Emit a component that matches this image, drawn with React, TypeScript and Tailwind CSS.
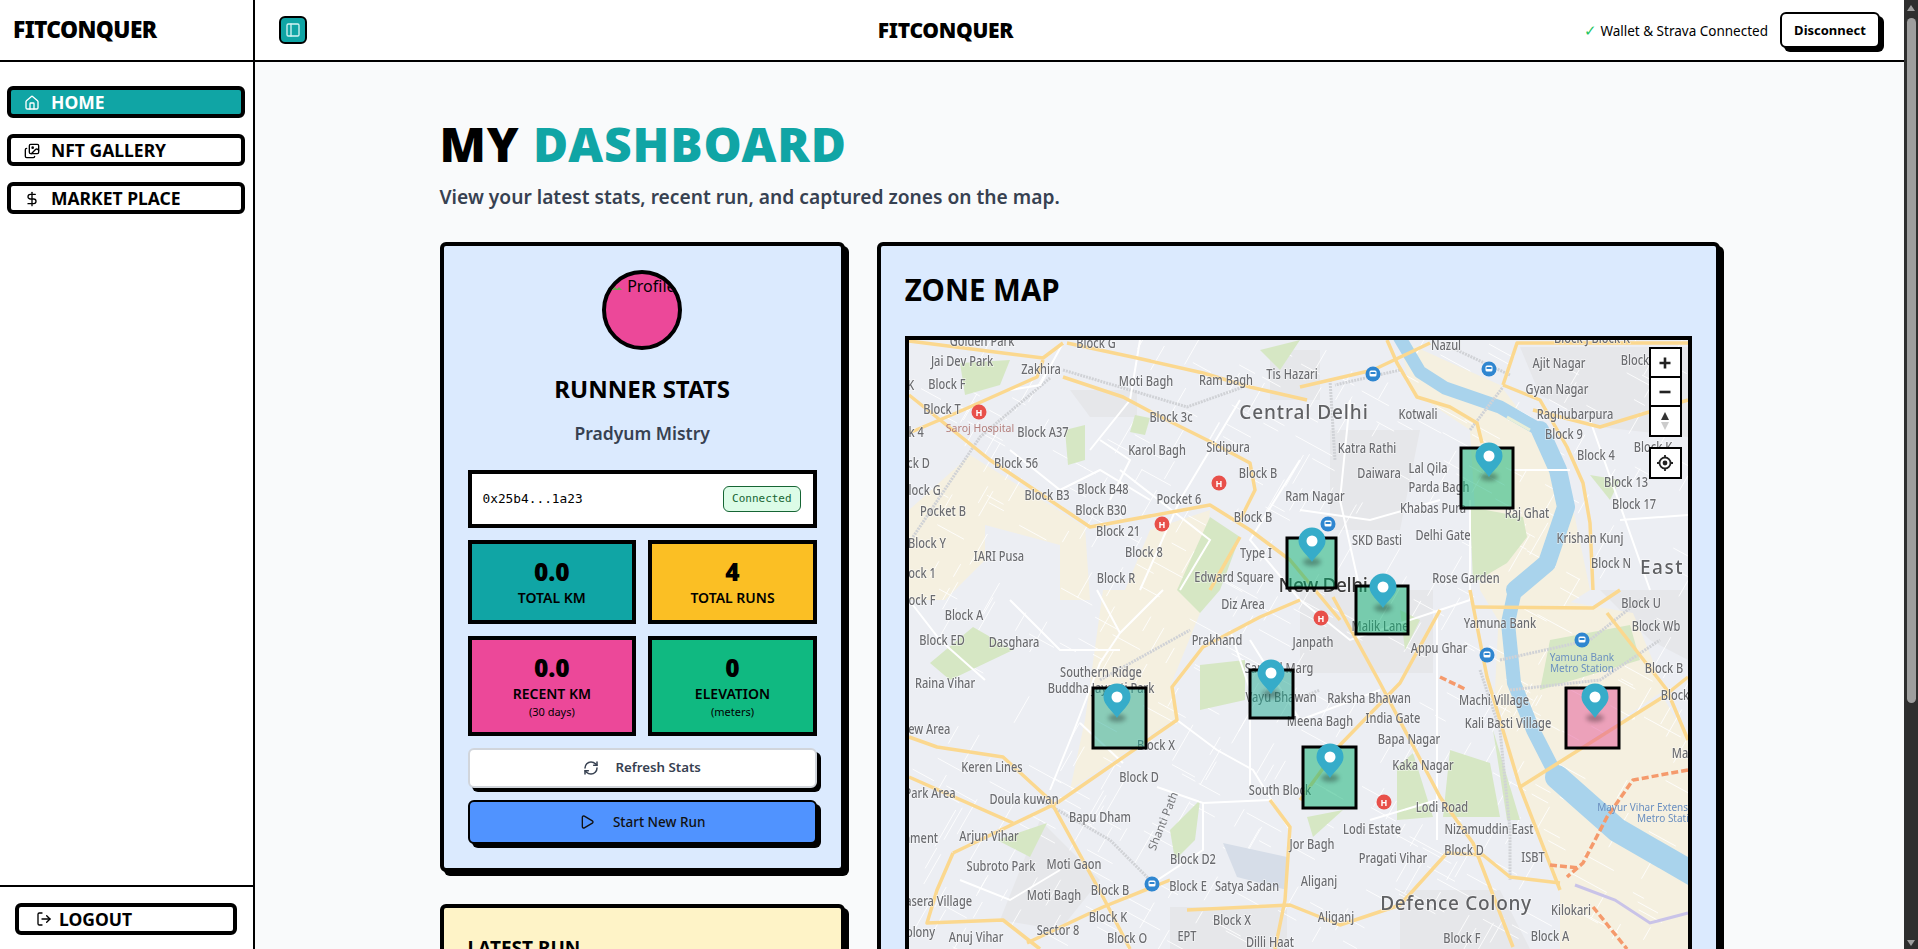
import { DollarSign, House, Images, LogOut, PanelLeft, Play, RefreshCw } from "lucide-react";

const labels: [string, number, number][] = [
  ["Golden Park", 982, 346], ["Block G", 1096, 348], ["Jai Dev Park", 962, 366], ["Zakhira", 1041, 374],
  ["Moti Bagh", 1146, 386], ["Ram Bagh", 1226, 385], ["Tis Hazari", 1292, 379], ["Block K", 895, 390],
  ["Block F", 947, 389], ["Block T", 942, 414], ["Block 4", 905, 437], ["Block A37", 1043, 437],
  ["Block 3c", 1171, 422], ["Karol Bagh", 1157, 455], ["Sidipura", 1228, 452], ["Block D", 910, 468],
  ["Block 56", 1016, 468], ["Block B", 1258, 478], ["Block G", 921, 495], ["Block B3", 1047, 500],
  ["Block B48", 1103, 494], ["Pocket 6", 1179, 504], ["Ram Nagar", 1315, 501], ["Pocket B", 943, 516],
  ["Block B30", 1101, 515], ["Block B", 1253, 522], ["Block 21", 1118, 536], ["Block Y", 927, 548],
  ["Block 8", 1144, 557], ["Type I", 1256, 558], ["IARI Pusa", 999, 561], ["Block 1", 917, 578],
  ["Block R", 1116, 583], ["Edward Square", 1234, 582], ["Nazul", 1446, 350], ["Block J Block K", 1592, 343],
  ["Ajit Nagar", 1559, 368], ["Block", 1635, 365], ["Gyan Nagar", 1557, 394], ["Kotwali", 1418, 419],
  ["Raghubarpura", 1575, 419], ["Block 9", 1564, 439], ["Katra Rathi", 1367, 453], ["Block 4", 1596, 460],
  ["Block K", 1653, 452], ["Lal Qila", 1428, 473], ["Daiwara", 1379, 478], ["Parda Bagh", 1439, 492],
  ["Block 13", 1626, 487], ["Block 17", 1634, 509], ["Khabas Pura", 1433, 513], ["Raj Ghat", 1527, 518],
  ["SKD Basti", 1377, 545], ["Delhi Gate", 1443, 540], ["Krishan Kunj", 1590, 543], ["Block N", 1611, 568],
  ["Rose Garden", 1466, 583], ["Block F", 917, 605], ["Block A", 964, 620], ["Block ED", 942, 645],
  ["Dasghara", 1014, 647], ["Diz Area", 1243, 609], ["Prakhand", 1217, 645], ["Janpath", 1313, 647],
  ["Sansad Marg", 1279, 673], ["Southern Ridge", 1101, 677], ["Buddha Jayanti Park", 1101, 693], ["Raina Vihar", 945, 688],
  ["Vayu Bhawan", 1281, 702], ["New Area", 925, 734], ["Block X", 1156, 750], ["Meena Bagh", 1320, 726],
  ["Keren Lines", 992, 772], ["Block D", 1139, 782], ["Park Area", 930, 798], ["Doula kuwan", 1024, 804],
  ["South Block", 1280, 795], ["Bapu Dham", 1100, 822], ["Arjun Vihar", 989, 841], ["Cantonment", 905, 843],
  ["Subroto Park", 1001, 871], ["Moti Gaon", 1074, 869], ["Block D2", 1193, 864], ["Jor Bagh", 1312, 849],
  ["Block E", 1188, 891], ["Satya Sadan", 1247, 891], ["Block B", 1110, 895], ["Moti Bagh", 1054, 900],
  ["Aliganj", 1319, 886], ["Basera Village", 935, 906], ["Block K", 1108, 922], ["Block X", 1232, 925],
  ["Colony", 917, 937], ["Anuj Vihar", 976, 942], ["Sector 8", 1058, 935], ["Block O", 1127, 943],
  ["EPT", 1187, 941], ["Dilli Haat", 1270, 947], ["Malik Lane", 1380, 631], ["Block U", 1641, 608],
  ["Block Wb", 1656, 631], ["Yamuna Bank", 1500, 628], ["Appu Ghar", 1439, 653], ["Block B", 1664, 673],
  ["Block", 1675, 700], ["Raksha Bhawan", 1369, 703], ["Machi Village", 1494, 705], ["India Gate", 1393, 723],
  ["Kali Basti Village", 1508, 728], ["Bapa Nagar", 1409, 744], ["Kaka Nagar", 1423, 770], ["Ma", 1680, 758],
  ["Lodi Road", 1442, 812], ["Lodi Estate", 1372, 834], ["Nizamuddin East", 1489, 834], ["Block D", 1464, 855],
  ["ISBT", 1533, 862], ["Pragati Vihar", 1393, 863], ["Aliganj", 1336, 922], ["Kilokari", 1571, 915],
  ["Block F", 1462, 943], ["Block A", 1550, 941],
];

const bigLabels: [string, number, number, number, string][] = [
  ["Central Delhi", 1304, 419, 0.9, "#606164"],
  ["East", 1662, 574, 1.5, "#606164"],
  ["New Delhi", 1323, 592, -0.4, "#3a3a3a"],
  ["Defence Colony", 1456, 910, 0.7, "#606164"],
];

const blueLabels: [string, number, number][] = [
  ["Yamuna Bank", 1582, 661], ["Metro Station", 1582, 672], ["Mayur Vihar Extension", 1650, 811], ["Metro Station", 1669, 822],
];

const urban = [
  "1520,347 1688,347 1688,437 1600,427 1540,395",
  "1070,390 1137,390 1137,417 1090,417",
  "1300,590 1433,590 1433,673 1300,673",
  "1170,907 1287,907 1287,949 1170,949",
  "1270,350 1320,350 1320,400 1270,400",
  "1600,590 1688,590 1688,660 1650,640",
  "1400,890 1500,890 1530,949 1400,949",
  "1040,820 1100,880 1060,930 1000,920",
  "1330,430 1420,430 1400,530 1330,530",
];

const beige = [
  "909,510 970,455 1085,527 1090,600 1060,600 1060,545 985,525 985,560 945,600 909,600",
  "1103,590 1125,590 1150,530 1210,510 1200,613 1170,687 1177,717 1070,790 1085,720",
  "1400,340 1500,385 1565,470 1590,590 1510,640 1480,590 1470,430 1410,390",
  "1500,590 1633,613 1665,690 1520,787 1495,690",
  "1520,787 1663,697 1688,740 1688,949 1560,949 1560,890",
];

const greens = [
  "1177,590 1210,517 1240,537 1220,590 1200,613",
  "1470,507 1523,517 1527,537 1507,563 1473,583",
  "1397,767 1413,753 1433,817 1397,820",
  "1450,750 1490,763 1500,817 1443,817",
  "1493,730 1520,820 1507,820",
  "1307,817 1343,810 1313,837",
  "930,663 973,627 1013,650 950,680",
  "997,840 1047,823 1030,857",
  "960,363 1010,360 1000,385 965,395",
  "1065,430 1085,425 1085,460 1068,465",
  "1135,415 1150,418 1145,435 1130,432",
  "1260,350 1300,340 1280,370",
  "1200,665 1245,660 1245,700 1200,710",
  "1400,610 1420,620 1405,650",
  "1590,475 1620,480 1610,500",
  "1550,640 1630,625 1640,660 1540,690",
  "1170,830 1200,800 1195,840 1175,860",
];

const majorRoads = [
  "M909,395 L990,460 L1090,527 L1210,505 L1250,530 L1290,560 L1340,620",
  "M909,341 L1003,353 L1043,358 L1063,343",
  "M1067,343 L1137,358 L1203,373 L1250,387 L1307,400",
  "M909,433 L963,410 L1037,377 L1043,360",
  "M1063,377 L1123,397 L1153,413 L1207,440 L1250,463 L1255,490 L1240,520",
  "M909,777 L1013,823",
  "M909,737 L937,747 L1003,757 L1050,800 L1103,897 L1130,949",
  "M953,853 L1057,803 L1177,720 L1172,687 L1203,647 L1260,617 L1300,600",
  "M953,853 L937,890 L927,923 L1003,920 L1040,949",
  "M1027,943 L1103,907 L1170,880",
  "M1300,387 L1373,370 L1430,343",
  "M1387,340 L1397,363 L1417,397 L1450,407 L1477,423 L1482,443",
  "M1503,385 L1540,400 L1567,447 L1583,483 L1590,523 L1593,590",
  "M1503,385 L1517,343 L1690,343",
  "M1533,410 L1600,427 L1688,400",
  "M1470,590 L1487,677 L1520,787 L1560,890",
  "M1520,787 L1663,697 L1688,677",
  "M1472,607 L1593,608 L1620,590",
  "M1607,613 L1667,690 L1688,740",
  "M1440,610 L1400,683 L1340,745 L1300,800",
  "M1333,597 L1380,683 L1440,797 L1473,843 L1513,947",
  "M1447,853 L1483,855 L1510,877 L1560,883",
  "M1270,800 L1290,827 L1285,900 L1275,949",
  "M1240,537 L1210,590",
  "M1187,910 L1290,905 L1340,925 L1400,905 L1447,853",
];

const minorRoads = [
  "M1097,590 L1120,633 L1100,663 L1073,733 L1050,790",
  "M1163,590 L1120,633",
  "M1177,720 L1217,750 L1253,770 L1290,830",
  "M1080,723 L1123,763",
  "M1157,787 L1203,803 L1270,800",
  "M1203,803 L1203,850 L1150,885",
  "M1063,343 L1040,385 L1010,390",
  "M1140,340 L1130,400 L1090,450",
  "M1240,400 L1180,500 L1140,590",
  "M1010,450 L1060,490 L1100,470 L1150,500",
  "M1120,470 L1210,540 L1180,590",
  "M1300,460 L1250,540 L1300,600",
  "M1300,510 L1370,520 L1440,500",
  "M1350,400 L1340,500 L1360,590",
  "M1470,500 L1470,600 L1440,610",
  "M1510,470 L1570,470",
  "M1590,420 L1650,590",
  "M1620,520 L1688,515",
  "M1300,600 L1350,640 L1440,610",
  "M1250,640 L1300,720 L1380,690",
  "M1230,630 L1250,690 L1250,790",
  "M909,600 L940,640 L985,680",
  "M1370,820 L1437,800",
  "M1437,610 L1437,840",
  "M1100,440 L1130,460 L1110,500",
  "M1010,600 L1060,650 L1120,650",
  "M960,880 L1010,900 L1060,870",
];

const rails = [
  "M913,537 L980,437 L1050,378",
  "M1063,370 L1187,407 L1243,387",
  "M1100,680 L1190,630",
  "M1400,370 L1335,385",
  "M1446,345 L1510,375",
  "M1470,430 L1503,387",
  "M1040,800 L1110,840 L1150,880",
  "M1480,670 L1500,730 L1510,830 L1510,880",
  "M1500,660 L1590,640 L1640,600",
  "M1510,690 L1600,680 L1660,640",
  "M1330,380 L1335,460",
  "M1295,700 L1320,690",
];

// fine street texture, fixed seed so the picture never changes
let seed = 4711;
const rnd = () => {
  seed = (seed * 16807) % 2147483647;
  return seed / 2147483647;
};
const streets: string[] = [];
for (let i = 0; i < 480; i++) {
  const x = 909 + rnd() * 779;
  const y = 340 + rnd() * 620;
  const len = 12 + rnd() * 30;
  const a = i % 2 === 0 ? 0.5 : -1.05;
  streets.push(`M${x.toFixed(1)},${y.toFixed(1)} l${(Math.cos(a) * len).toFixed(1)},${(Math.sin(a) * len).toFixed(1)}`);
}

const buses: [number, number][] = [[1373, 374], [1489, 369], [1328, 524], [1152, 884], [1487, 655], [1582, 640]];
const hospitals: [number, number][] = [[979, 412], [1219, 483], [1162, 524], [1321, 618], [1384, 802]];

const zones = [
  { x: 1461, y: 448, w: 52, h: 60, fill: "#08b070" },
  { x: 1287, y: 538, w: 49, h: 50, fill: "#08b070" },
  { x: 1356, y: 586, w: 52, h: 48, fill: "#08b070" },
  { x: 1093, y: 688, w: 53, h: 60, fill: "#20a890" },
  { x: 1250, y: 670, w: 43, h: 48, fill: "#20a890" },
  { x: 1303, y: 747, w: 53, h: 61, fill: "#08b070" },
  { x: 1566, y: 688, w: 53, h: 60, fill: "#e45293" },
];

const pins: [number, number][] = [[1489, 456], [1312, 541], [1383, 587], [1117, 697], [1271, 673], [1330, 757], [1595, 697]];

const navItems = [
  { label: "HOME", icon: House, active: true },
  { label: "NFT GALLERY", icon: Images, active: false },
  { label: "MARKET PLACE", icon: DollarSign, active: false },
];

const stats = [
  { value: "0.0", label: "TOTAL KM", bg: "bg-[#10a5a5]" },
  { value: "4", label: "TOTAL RUNS", bg: "bg-[#fbbf24]" },
  { value: "0.0", label: "RECENT KM", sub: "(30 days)", bg: "bg-[#ec4899]" },
  { value: "0", label: "ELEVATION", sub: "(meters)", bg: "bg-[#10b981]" },
];

const ZoneMap = () => (
  <svg viewBox="909 340 779 640" className="block w-[779px] h-[640px]">
    <rect x="909" y="340" width="779" height="640" fill="#eceef3" />
    <g className="blur-[0.5px]">
      {urban.map((points) => (
        <polygon key={points} points={points} fill="#e6e7ea" />
      ))}
      {beige.map((points) => (
        <polygon key={points} points={points} fill="#f5f0e0" />
      ))}
      {streets.map((d) => (
        <path key={d} d={d} fill="none" stroke="#ffffff" strokeWidth="1" strokeOpacity="0.85" />
      ))}
      {greens.map((points) => (
        <polygon key={points} points={points} fill="#d6e7c4" />
      ))}
      <polygon points="1223,843 1287,857 1287,890 1237,877" fill="#d6dde8" />
      <path d="M1398,335 L1420,372 L1445,388 L1500,407 L1540,430" fill="none" stroke="#a9d3ec" strokeWidth="13" strokeLinejoin="round" />
      <path d="M1540,430 L1558,470 L1566,507 L1547,563 L1515,590" fill="none" stroke="#a9d3ec" strokeWidth="18" strokeLinejoin="round" strokeLinecap="round" />
      <path d="M1515,590 L1508,623 L1514,683 L1533,730 L1557,777" fill="none" stroke="#a9d3ec" strokeWidth="14" strokeLinejoin="round" strokeLinecap="round" />
      <path d="M1557,777 L1617,830 L1695,875" fill="none" stroke="#a9d3ec" strokeWidth="24" strokeLinejoin="round" strokeLinecap="round" />
      <path d="M1507,417 L1530,430" fill="none" stroke="#e9efd8" strokeWidth="3" />
      {rails.map((d) => (
        <path key={d} d={d} fill="none" stroke="#d0d2d6" strokeWidth="3" strokeDasharray="2 1" />
      ))}
      {minorRoads.map((d) => (
        <path key={d} d={d} fill="none" stroke="#ffffff" strokeWidth="2" />
      ))}
      {majorRoads.map((d) => (
        <path key={d} d={d} fill="none" stroke="#fbd88f" strokeWidth="3.5" strokeLinejoin="round" />
      ))}
      <path d="M1575,885 L1615,900 L1650,923 L1688,913" fill="none" stroke="#c9c3e8" strokeWidth="3" />
      <path d="M1688,770 L1633,780 L1607,817 L1583,863 L1567,877 M1593,907 L1627,949 M1440,677 L1467,690 M1550,865 L1580,868" fill="none" stroke="#f59a6c" strokeWidth="3.5" strokeDasharray="7 3" />
      {buses.map(([x, y]) => (
        <g key={`${x}-${y}`}>
          <circle cx={x} cy={y} r="7.5" fill="#2f86d0" />
          <rect x={x - 3.5} y={y - 3.5} width="7" height="6" rx="1.5" fill="#fff" />
          <rect x={x - 2.5} y={y - 2} width="5" height="2" fill="#2f86d0" />
        </g>
      ))}
      {hospitals.map(([x, y]) => (
        <g key={`${x}-${y}`}>
          <circle cx={x} cy={y} r="7.5" fill="#e8504a" />
          <text x={x} y={y + 3.5} textAnchor="middle" fontSize="9" fontWeight="700" fill="#fff">H</text>
        </g>
      ))}
      {labels.map(([text, x, y]) => (
        <text
          key={`${text}-${x}`}
          transform={`translate(${x} ${y}) scale(0.82 1)`}
          textAnchor="middle"
          fontSize="13.5"
          fontWeight="500"
          fill="#6b6c70"
          stroke="#fff"
          strokeOpacity="0.55"
          strokeWidth="1.5"
          paintOrder="stroke"
        >
          {text}
        </text>
      ))}
      {bigLabels.map(([text, x, y, spacing, color]) => (
        <text key={text} x={x} y={y} textAnchor="middle" fontSize="19" fontWeight="500" letterSpacing={spacing} fill={color} stroke="#fff" strokeOpacity="0.55" strokeWidth="1.5" paintOrder="stroke">
          {text}
        </text>
      ))}
      {blueLabels.map(([text, x, y]) => (
        <text key={`${text}-${x}`} x={x} y={y} textAnchor="middle" fontSize="10" fill="#6a8fc0">
          {text}
        </text>
      ))}
      <text x="980" y="432" textAnchor="middle" fontSize="10.5" fill="#b47f7c">Saroj Hospital</text>
      <text x="1163" y="825" textAnchor="middle" fontSize="11.5" fill="#747578" transform="rotate(-68 1163 821)">Shanti Path</text>
    </g>
    {zones.map((zone) => (
      <rect key={zone.x} x={zone.x} y={zone.y} width={zone.w} height={zone.h} fill={zone.fill} fillOpacity="0.5" stroke="#000" strokeWidth="3" />
    ))}
    {pins.map(([x, y]) => (
      <g key={x} transform={`translate(${x} ${y})`}>
        <ellipse cx="0" cy="21" rx="9" ry="4" fill="#000" fillOpacity="0.3" className="blur-[2px]" />
        <path d="M0,21 C-4,14 -13.5,8 -13.5,0 A13.5,13.5 0 1 1 13.5,0 C13.5,8 4,14 0,21 Z" fill="#36acc9" />
        <circle cx="0" cy="0" r="5.5" fill="#fff" />
      </g>
    ))}
  </svg>
);

const MapControls = () => (
  <div className="absolute right-[6px] top-[7px] flex flex-col gap-[10px]">
    <div className="flex flex-col border-2 border-black bg-white w-[33px]">
      <button className="h-[29px] flex items-center justify-center border-b-2 border-black">
        <svg width="14" height="14" viewBox="0 0 14 14"><path d="M7 1.5v11M1.5 7h11" stroke="#222" strokeWidth="2.6" /></svg>
      </button>
      <button className="h-[29px] flex items-center justify-center border-b-2 border-black">
        <svg width="14" height="14" viewBox="0 0 14 14"><path d="M1.5 7h11" stroke="#222" strokeWidth="2.6" /></svg>
      </button>
      <button className="h-[28px] flex items-center justify-center">
        <svg width="10" height="20" viewBox="0 0 10 20">
          <path d="M5 1l4 8H1z" fill="#333" />
          <path d="M5 19l4-8H1z" fill="#ccc" />
        </svg>
      </button>
    </div>
    <button className="h-[32px] w-[33px] flex items-center justify-center border-2 border-black bg-white">
      <svg width="18" height="18" viewBox="0 0 18 18" fill="none">
        <circle cx="9" cy="9" r="5.5" stroke="#222" strokeWidth="1.8" />
        <circle cx="9" cy="9" r="2.4" fill="#222" />
        <path d="M9 1v2.5M9 14.5V17M1 9h2.5M14.5 9H17" stroke="#222" strokeWidth="1.8" />
      </svg>
    </button>
  </div>
);

const App = () => {
  return (
    <div className="flex h-screen overflow-hidden bg-white text-black font-['Noto_Sans',sans-serif]">
      <aside className="flex flex-col w-[255px] shrink-0 border-r-2 border-black">
        <div className="h-[62px] shrink-0 flex items-center pl-[13px] pt-[1px] border-b-2 border-black">
          <span className="text-[22.7px] font-black tracking-[-0.6px]">FITCONQUER</span>
        </div>
        <nav className="flex-1 flex flex-col gap-4 pt-6 pl-[7px] pr-2">
          {navItems.map((item) => (
            <a
              key={item.label}
              className={`flex items-center gap-[11px] h-8 pl-[13px] pt-[1px] border-4 border-black rounded-md text-[17.5px] font-bold ${item.active ? "bg-[#10a5a5] text-white" : "bg-white"}`}
            >
              <item.icon size={16} />
              {item.label}
            </a>
          ))}
        </nav>
        <div className="h-[64px] shrink-0 border-t-2 border-black pt-4 pl-[15px] pr-4">
          <button className="flex items-center gap-[7px] w-full h-8 pl-[17px] border-4 border-black rounded-md bg-white text-[17.5px] font-bold">
            <LogOut size={16} />
            LOGOUT
          </button>
        </div>
      </aside>

      <div className="flex-1 min-w-0 flex flex-col">
        <header className="h-[62px] shrink-0 flex items-center justify-between pl-6 pr-6 border-b-2 border-black">
          <button className="w-7 h-7 flex items-center justify-center border-2 border-black rounded-md bg-[#10a5a5] text-[#d5f3f3]">
            <PanelLeft size={16} />
          </button>
          <span className="text-[21px] font-black tracking-[-0.3px] pt-[2px]">FITCONQUER</span>
          <div className="flex items-center gap-3">
            <span className="text-[13.5px] whitespace-nowrap">
              <span className="text-[#22c55e] text-[15px]">✓</span> Wallet &amp; Strava Connected
            </span>
            <button className="w-[100px] h-9 pt-[1px] border-2 border-black rounded-md bg-white text-[13px] font-bold shadow-[4px_4px_0_0_#000]">
              Disconnect
            </button>
          </div>
        </header>

        <main className="flex-1 overflow-hidden bg-[#f9fafb]">
          <div className="w-[1280px] mx-auto pt-[58px]">
            <h1 className="text-[48px] leading-[48px] font-black tracking-[0.9px]">
              MY <span className="text-[#10a5a5]">DASHBOARD</span>
            </h1>
            <p className="mt-[15px] text-[19.2px] leading-7 font-semibold text-[#374151]">
              View your latest stats, recent run, and captured zones on the map.
            </p>

            <div className="grid grid-cols-3 gap-8 mt-[31px]">
              <div className="flex flex-col gap-8">
                <section className="h-[630px] p-6 border-4 border-black rounded-md bg-[#dbeafe] shadow-[4px_4px_0_0_#000]">
                  <div className="w-20 h-20 mx-auto rounded-full border-4 border-black bg-[#ec4899] overflow-hidden flex items-start whitespace-nowrap text-[16px] leading-6">
                    <svg width="16" height="16" viewBox="0 0 16 16" className="mt-[4px] ml-[2px] shrink-0">
                      <path d="M2 12l4-4 3 3 2-2 3 3z" fill="#6aa84f" />
                      <path d="M3 3h9" stroke="#9ca3af" strokeWidth="1.5" />
                    </svg>
                    <span className="ml-[3px]">Profile</span>
                  </div>
                  <h2 className="mt-[23px] text-center text-[24px] leading-8 font-bold">RUNNER STATS</h2>
                  <p className="mt-[14px] text-center text-[17.5px] leading-7 font-semibold text-[#374151]">Pradyum Mistry</p>
                  <div className="mt-[23px] h-[58px] flex items-center justify-between pl-[11px] pr-3 border-4 border-black bg-white">
                    <span className="font-['DejaVu_Sans_Mono',monospace] text-[12.8px]">0x25b4...1a23</span>
                    <span className="h-[26px] w-[78px] flex items-center justify-center border border-[#166534] rounded-md bg-[#dcfce7] text-[#166534] font-['DejaVu_Sans_Mono',monospace] text-[11px]">
                      Connected
                    </span>
                  </div>
                  <div className="grid grid-cols-2 gap-3 mt-3">
                    {stats.map((stat) => (
                      <div key={stat.label} className={`p-3 border-4 border-black text-center ${stat.bg}`}>
                        <div className="text-[24.5px] leading-8 font-black">{stat.value}</div>
                        <div className="text-[14px] leading-5 font-semibold">{stat.label}</div>
                        {stat.sub && <div className="text-[11px] leading-4">{stat.sub}</div>}
                      </div>
                    ))}
                  </div>
                  <button className="mt-3 w-full h-10 flex items-center justify-center gap-4 border-2 border-[#d1d5db] rounded-md bg-white text-[#374151] text-[13.3px] font-semibold shadow-[4px_4px_0_0_#000]">
                    <RefreshCw size={16} strokeWidth={2.25} />
                    Refresh Stats
                  </button>
                  <button className="mt-3 w-full h-11 flex items-center justify-center gap-[18px] border-2 border-black rounded-md bg-[#5093ff] text-[#111] text-[13.5px] font-medium shadow-[4px_4px_0_0_#000]">
                    <Play size={16} />
                    Start New Run
                  </button>
                </section>
                <section className="h-[300px] p-6 border-4 border-black rounded-md bg-[#fef3c7] shadow-[4px_4px_0_0_#000]">
                  <h2 className="text-[19px] leading-7 font-bold pt-[2px]">LATEST RUN</h2>
                </section>
              </div>

              <section className="col-span-2 h-[800px] p-6 border-4 border-black rounded-md bg-[#dbeafe] shadow-[4px_4px_0_0_#000]">
                <h2 className="text-[29.5px] leading-9 font-bold pt-[2px]">ZONE MAP</h2>
                <div className="relative mt-[28px] w-[787px] border-4 border-black overflow-hidden">
                  <ZoneMap />
                  <MapControls />
                </div>
              </section>
            </div>
          </div>
        </main>
      </div>

      <div className="relative w-[14px] shrink-0 bg-[#2e2e2e]">
        <div className="absolute left-[3px] top-[5px] w-0 h-0 border-l-[4px] border-r-[4px] border-b-[6px] border-l-transparent border-r-transparent border-b-[#9e9e9e]" />
        <div className="absolute left-[3px] top-[18px] h-[685px] w-[9px] rounded-full bg-[#9e9e9e]" />
        <div className="absolute left-[3px] bottom-[3px] w-0 h-0 border-l-[4px] border-r-[4px] border-t-[6px] border-l-transparent border-r-transparent border-t-[#9e9e9e]" />
      </div>
    </div>
  );
};

export default App;
